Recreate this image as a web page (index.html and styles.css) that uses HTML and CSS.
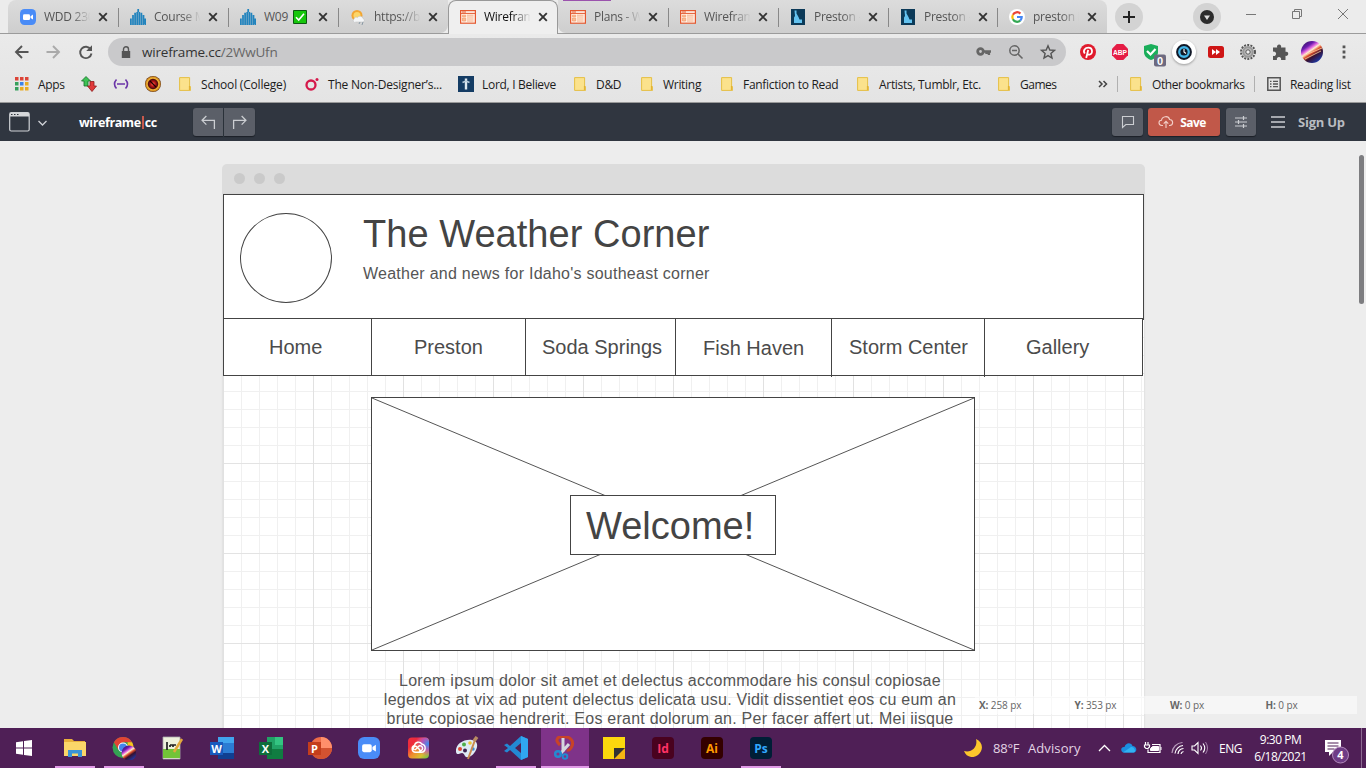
FILE: index.html
```html
<!DOCTYPE html>
<html lang="en">
<head>
<meta charset="utf-8">
<title>Wireframe.cc</title>
<link rel="stylesheet" href="styles.css">
</head>
<body>
<svg class="defs" width="0" height="0">
  <defs>
    <linearGradient id="rainbow" x1="0" y1="0" x2="1" y2="1"><stop offset="0" stop-color="#f0303c"/><stop offset=".25" stop-color="#ee2a3c"/><stop offset=".5" stop-color="#f08a2c"/><stop offset=".75" stop-color="#d8c030"/><stop offset="1" stop-color="#5cc04a"/></linearGradient>
    <radialGradient id="violet" cx=".95" cy=".3" r=".6"><stop offset="0" stop-color="#3a8ef0"/><stop offset=".5" stop-color="#b04ad0" stop-opacity=".8"/><stop offset="1" stop-color="#e436b8" stop-opacity="0"/></radialGradient>
    <linearGradient id="streak" x1="0" y1="0" x2=".7" y2="1"><stop offset="0" stop-color="#1b1140"/><stop offset=".3" stop-color="#6c1bb0"/><stop offset=".42" stop-color="#e66be0"/><stop offset=".5" stop-color="#fff0d0"/><stop offset=".6" stop-color="#e0512c"/><stop offset=".72" stop-color="#371030"/><stop offset="1" stop-color="#1d3aa8"/></linearGradient>
    <radialGradient id="ball"><stop offset="0" stop-color="#ff7a5a"/><stop offset=".3" stop-color="#c01818"/><stop offset=".58" stop-color="#500c0c"/><stop offset=".72" stop-color="#f4b838"/><stop offset=".88" stop-color="#d08a20"/><stop offset="1" stop-color="#5a2a08"/></radialGradient>
  </defs>
  <symbol id="close" viewBox="0 0 10 10"><path d="M1.2 1.2l7.6 7.6M8.8 1.2L1.2 8.8" stroke="currentColor" stroke-width="1.9"/></symbol>
  <symbol id="zoomapp" viewBox="0 0 16 16"><rect width="16" height="16" rx="4.5" fill="#4a8cf7"/><rect x="3" y="5.2" width="7" height="5.8" rx="1.3" fill="#fff"/><path d="M10.5 7.3L13 5.6v5L10.5 9z" fill="#fff"/></symbol>
  <symbol id="canvas" viewBox="0 0 16 16"><path d="M.9 16V9.5M3 16V6M5.1 16V3.8M7.2 16V3M8.2 3V0M9.3 16V3M11.400 16V3.8M13.5 16V6M15.3 16V9.5" stroke="#2183bd" stroke-width="1.75"/></symbol>
  <symbol id="wire" viewBox="0 0 16 14"><rect x=".6" y=".6" width="14.8" height="12.6" fill="#fff3ea" stroke="#e4582f" stroke-width="1.2"/><path d="M1 3.4h14" stroke="#e4582f"/><path d="M3 1v2M5 1v2" stroke="#e4582f"/><path d="M2.5 5.2h3.2v1.5H2.5zM2.5 8h3.2v3H2.5zM7 5.2h6.5M7 7h6.5M7 9h6.5M7 11h6.5" fill="#f9bd96" stroke="#f4a071" stroke-width=".8"/></symbol>
  <symbol id="idaho" viewBox="0 0 14 16"><path d="M0 0h14v16H0z" fill="#0c3a58"/><path d="M3.500 1.500h2v3L7.500 8l1 2.500H11V14H3V8.500L4 7z" fill="#63c2ef"/></symbol>
  <symbol id="folder" viewBox="0 0 12 14"><path d="M.6.6h10v9h1v3.800h-11z" fill="#fbe28c" stroke="#e5bf45"/><path d="M10.4 9v4" stroke="#e0ae2d" fill="none"/></symbol>
</svg>

<header class="chrome">
  <div class="tabstrip">
    <div class="tab first"><svg class="fav"><use href="#zoomapp"/></svg><span class="ttl">WDD 230</span><svg class="x"><use href="#close"/></svg></div>
    <div class="tab"><svg class="fav"><use href="#canvas"/></svg><span class="ttl">Course M</span><svg class="x"><use href="#close"/></svg></div>
    <div class="tab"><svg class="fav"><use href="#canvas"/></svg><span class="ttl solid">W09 <svg class="check" viewBox="0 0 14 14"><path d="M.5.5h13v13H.5z" fill="#16c60c" stroke="#0b5a10"/><path d="M3 7.3l2.700 2.800L11 3.800" stroke="#fff" stroke-width="1.6" fill="none"/></svg></span><svg class="x"><use href="#close"/></svg></div>
    <div class="tab nosep"><svg class="fav" viewBox="0 0 16 16"><circle cx="7" cy="6.500" r="5.500" fill="#f2a633"/><circle cx="7" cy="6.500" r="3.500" fill="#fcd669"/><path d="M4 10a2.200 2.200 0 0 1 3.500-1.400A3 3 0 0 1 13 9.500a1.800 1.800 0 0 1 0 3.500H6a1.800 1.800 0 0 1-2-3z" fill="#f4f6f8" stroke="#bbb" stroke-width=".5"/><path d="M10 13l-1 2M13 13l-1 3" stroke="#8a9aa5"/></svg><span class="ttl">https://b</span><svg class="x"><use href="#close"/></svg></div>
    <div class="tab active"><svg class="fav wf"><use href="#wire"/></svg><span class="ttl">Wirefram</span><svg class="x"><use href="#close"/></svg></div>
    <div class="tab lit"><svg class="fav wf"><use href="#wire"/></svg><span class="ttl">Plans - W</span><svg class="x"><use href="#close"/></svg></div>
    <div class="tab"><svg class="fav wf"><use href="#wire"/></svg><span class="ttl">Wirefram</span><svg class="x"><use href="#close"/></svg></div>
    <div class="tab"><svg class="fav"><use href="#idaho"/></svg><span class="ttl">Preston -</span><svg class="x"><use href="#close"/></svg></div>
    <div class="tab penult"><svg class="fav"><use href="#idaho"/></svg><span class="ttl">Preston -</span><svg class="x"><use href="#close"/></svg></div>
    <div class="tab last nosep"><svg class="fav" viewBox="0 0 16 16"><circle cx="8" cy="8" r="8" fill="#fff"/><g fill="none" stroke-width="2.2"><path d="M11.400 4.600A4.700 4.700 0 0 0 3.900 5.800" stroke="#ea4335"/><path d="M3.900 5.800a4.700 4.700 0 0 0 0 4.400" stroke="#fbbc05"/><path d="M3.900 10.200a4.700 4.700 0 0 0 7.300 1.400" stroke="#34a853"/><path d="M11.200 11.600A4.700 4.700 0 0 0 12.700 8H8" stroke="#4285f4"/></g></svg><span class="ttl">preston i</span><svg class="x"><use href="#close"/></svg></div>
    <div class="round plus"><svg viewBox="0 0 14 14" width="14" height="14"><path d="M7 1v12M1 7h12" stroke="#222" stroke-width="2"/></svg></div>
    <div class="round search"><svg viewBox="0 0 14 14" width="14" height="14"><circle cx="7" cy="7" r="7" fill="#2b2b2b"/><path d="M4 5.500h6L7 10z" fill="#ddd"/></svg></div>
    <svg class="winctl" viewBox="0 0 104 12"><path d="M0 6.500h10M46.500 3.500h7v7h-7zM48.500 3.500v-2h7v7h-2M92 1l10 10M102 1L92 11" fill="none" stroke="#777"/></svg>
  </div>

  <div class="toolbar">
    <svg class="nav" viewBox="0 0 80 16"><g fill="none" stroke-width="1.900"><path d="M14.500 8H2M8 2L2 8l6 6" stroke="#555"/><path d="M32.500 8H45M39 2l6 6-6 6" stroke="#aaa"/><path d="M76.700 5.300A5.700 5.700 0 1 0 77.500 9.500" stroke="#555"/></g><path d="M78 1.200V7h-5.800z" fill="#555"/></svg>
    <div class="omnibox">
      <svg class="lock" viewBox="0 0 10 13"><path d="M.8 5h8.400v7H.8z" fill="#555"/><path d="M2.500 5V3.300a2.500 2.500 0 0 1 5 0V5" stroke="#555" stroke-width="1.400" fill="none"/></svg>
      <span class="url">wireframe.cc<i>/2WwUfn</i></span>
      <svg class="omni" viewBox="0 0 80 16"><circle cx="4.500" cy="7.500" r="2.800" fill="none" stroke="#666" stroke-width="2.800"/><path d="M8 7.500h7M12.900 7.500v3.500M10.500 8v2" stroke="#666" stroke-width="2.400"/><circle cx="38.500" cy="6.500" r="4.700" fill="none" stroke="#666" stroke-width="1.500"/><path d="M36 6.500h5M42 10l4.500 4.500" stroke="#666" stroke-width="1.600"/><path d="M72 1.800l1.800 4.200 4.700.4-3.600 3.100 1.100 4.500-4-2.400-4 2.400 1.100-4.500-3.600-3.100 4.700-.4z" fill="none" stroke="#555" stroke-width="1.400"/></svg>
    </div>
    <div class="exts">
      <svg viewBox="0 0 32 32"><circle cx="16" cy="16" r="8" fill="#e01b2d"/><path d="M14.200 22l2-8M12.800 17.500c-2.200-3 .3-5.900 3.600-5.900 4.800 0 4.500 7 1 7-1 0-1.800-.5-2-1.200" fill="none" stroke="#fff" stroke-width="1.800"/></svg>
      <svg viewBox="0 0 32 32"><path d="M12.700 8h6.600l4.700 4.700v6.600L19.300 24h-6.600L8 19.300v-6.600z" fill="#e51c45"/><text x="16" y="19" class="abp" text-anchor="middle" textLength="14" lengthAdjust="spacingAndGlyphs">ABP</text></svg>
      <svg viewBox="0 0 32 32"><path d="M15 8l7 2v6c0 4-3 6.500-7 8-4-1.500-7-4-7-8v-6z" fill="#1aae5a"/><path d="M11 15l3.500 3.500 5-5.500" stroke="#fff" stroke-width="2.200" fill="none"/><rect x="18" y="18.500" width="12" height="12" rx="2" fill="#6d6a80"/><text x="24" y="28.500" class="badge" text-anchor="middle">0</text></svg>
      <svg viewBox="0 0 32 32"><circle class="halo" cx="16" cy="16" r="12" fill="#fff"/><circle cx="16" cy="16" r="6.900" fill="#43b5e8" stroke="#111827" stroke-width="2"/><circle cx="16" cy="16" r="3.600" fill="#111827"/><path d="M16 13v3l2 1.500" stroke="#fff" stroke-width="1.100" fill="none"/></svg>
      <svg viewBox="0 0 32 32"><rect x="8" y="10" width="16" height="12" rx="2.500" fill="#cf1616"/><path d="M12 13l4 3-4 3zM16 13l4 3-4 3z" fill="#fff"/></svg>
      <svg viewBox="0 0 32 32"><circle cx="16" cy="16" r="7" fill="none" stroke="#555" stroke-width="2" stroke-dasharray="2 1.200"/><circle cx="16" cy="16" r="4.800" fill="#bbb" stroke="#999" stroke-width="2.200"/><circle cx="16" cy="16" r="2.200" fill="#eee" stroke="#555"/></svg>
      <svg viewBox="0 0 32 32"><path d="M9 11.500h4.200a2.100 2.100 0 1 1 3.800 0H21.500v4.300a2.100 2.100 0 1 1 0 4V24H17a2.200 2.200 0 1 0-4 0H9v-4.200a2.200 2.200 0 1 0 0-4z" fill="#555"/></svg>
      <svg viewBox="0 0 32 32"><circle cx="16" cy="16" r="11" fill="url(#streak)"/><path d="M7 20L26 12M9 23l16-8" stroke="#ffcf9f" stroke-width=".8"/></svg>
      <svg viewBox="0 0 32 32"><path d="M14.600 9.500h2.800v2.800h-2.800zM14.600 14.600h2.800v2.800h-2.800zM14.600 19.700h2.800v2.800h-2.800z" fill="#555"/></svg>
    </div>
  </div>

  <nav class="bookmarks">
    <div class="bm apps"><svg viewBox="0 0 14 14"><path d="M0 0h3.500v3.500H0zM5 0h3.500v3.500H5zM10 0h3.500v3.500H10z" fill="#dc4437"/><path d="M0 5h3.500v3.500H0z" fill="#37a05c"/><path d="M5 5h3.500v3.500H5z" fill="#3b83ea"/><path d="M10 5h3.500v3.500H10zM5 10h3.500v3.500H5zM10 10h3.500v3.500H10z" fill="#e9ac23"/><path d="M0 10h3.500v3.500H0z" fill="#37a05c"/></svg><span>Apps</span></div>
    <div class="bm ico"><svg viewBox="0 0 16 16"><path d="M5 .5L9.500 5H7v5H3V5H.5z" fill="#3ec255" stroke="#16702a" stroke-width=".8"/><path d="M9 5.500h4v4.500h2.500L11 15.500 6.500 10H9z" fill="#e03a3a" stroke="#8d1c1c" stroke-width=".8"/></svg></div>
    <div class="bm ico"><svg viewBox="0 0 16 16"><path d="M3.500 3.500Q-.5 8 3.500 12.500M12.500 3.500Q16.500 8 12.500 12.500M4 8h8" fill="none" stroke="#6b35a8" stroke-width="1.600"/></svg></div>
    <div class="bm ball"><svg viewBox="0 0 16 16"><circle cx="8" cy="8" r="8" fill="url(#ball)"/><path d="M5 5l6 6" stroke="#200" stroke-width="1.200"/></svg></div>
    <div class="bm fo school"><svg><use href="#folder"/></svg><span>School (College)</span></div>
    <div class="bm nond"><svg viewBox="0 0 14 14"><circle cx="6" cy="8" r="4.500" fill="none" stroke="#d5184a" stroke-width="2.300"/><circle cx="12" cy="2.500" r="1.500" fill="#d5184a"/></svg><span>The Non-Designer’s...</span></div>
    <div class="bm lord"><svg viewBox="0 0 16 16"><path d="M0 0h16v16H0z" fill="#143c64"/><path d="M8 2.500v11" stroke="#dce8f0" stroke-width="2.400"/><path d="M4.500 6.500L8 5l3.500 1.500" fill="none" stroke="#b9cddc" stroke-width="1.600"/></svg><span>Lord, I Believe</span></div>
    <div class="bm fo dnd"><svg><use href="#folder"/></svg><span>D&amp;D</span></div>
    <div class="bm fo writing"><svg><use href="#folder"/></svg><span>Writing</span></div>
    <div class="bm fo fan"><svg><use href="#folder"/></svg><span>Fanfiction to Read</span></div>
    <div class="bm fo artists"><svg><use href="#folder"/></svg><span>Artists, Tumblr, Etc.</span></div>
    <div class="bm fo games"><svg><use href="#folder"/></svg><span>Games</span></div>
    <div class="bm more"><svg viewBox="0 0 10 8"><path d="M1 1l3 3-3 3M5.500 1l3 3-3 3" stroke="#444" stroke-width="1.500" fill="none"/></svg></div>
    <div class="bm fo other"><svg><use href="#folder"/></svg><span>Other bookmarks</span></div>
    <div class="bm reading"><svg viewBox="0 0 14 14"><path d="M.8.8h12.400v12.400H.8z" fill="none" stroke="#555" stroke-width="1.500"/><path d="M3 4.300h1.500M6 4.300h5M3 7h1.500M6 7h5M3 9.700h1.500M6 9.700h5" stroke="#555" stroke-width="1.300"/></svg><span>Reading list</span></div>
  </nav>
</header>

<div class="appbar">
  <svg class="window" viewBox="0 0 38 20"><rect x=".7" y=".7" width="19.500" height="18.300" rx="1.500" fill="none" stroke="#cfd2d6" stroke-width="1.200"/><path d="M1 1h19v3.500H1z" fill="#d5d7da"/><path d="M2 2.500h1.500M5 2.500h1.500M8 2.500h1.500" stroke="#30363f"/><path d="M29.500 9l4 4 4-4" fill="none" stroke="#cfd2d6" stroke-width="1.300"/></svg>
  <div class="brand">wireframe<b></b>cc</div>
  <div class="btn undo"><svg viewBox="0 0 14 14"><path d="M5 1L1 5l4 4M1 5h11.500v8" fill="none" stroke="#ccced2" stroke-width="1.200"/></svg></div>
  <div class="btn redo"><svg viewBox="0 0 14 14"><path d="M9 1l4 4-4 4M13 5H1.500v8" fill="none" stroke="#ccced2" stroke-width="1.200"/></svg></div>
  <div class="btn comment"><svg viewBox="0 0 14 14"><path d="M1.500 1.500h11v8H4.800L1.500 12.500z" fill="none" stroke="#ccced2" stroke-width="1.100"/></svg></div>
  <div class="btn save"><svg viewBox="0 0 16 14"><path d="M5 10.500H3.800C0 10.200.200 5.500 3.500 5.300 4 1 10.500.300 11.600 4.500c4 .2 4 5.700.2 6H11M8 13V6.500M5.700 8.700L8 6.300l2.300 2.400" fill="none" stroke="#f3cfc8" stroke-width="1.100"/></svg><span>Save</span></div>
  <div class="btn sliders"><svg viewBox="0 0 14 14"><path d="M1 3h12M1 7h12M1 11h12M9.500 1v4M4.500 5v4M9.500 9v4" stroke="#ccced2" stroke-width="1.200"/></svg></div>
  <svg class="burger" viewBox="0 0 14 12"><path d="M0 1h14M0 6h14M0 11h14" stroke="#ccced2" stroke-width="1.300"/></svg>
  <span class="signup">Sign Up</span>
</div>

<main class="stage">
  <div class="frame">
    <div class="framebar"><i></i><i></i><i></i></div>
    <div class="page">
      <div class="head">
        <div class="logo"></div>
        <div class="titles"><h1>The Weather Corner</h1><p>Weather and news for Idaho's southeast corner</p></div>
      </div>
      <div class="menu">
        <div class="home">Home</div><div class="preston">Preston</div><div class="soda">Soda Springs</div><div class="fish">Fish Haven</div><div class="storm">Storm Center</div><div class="gallery">Gallery</div>
      </div>
      <div class="hero">
        <svg viewBox="0 0 602 252"><path d="M0 0L602 252M602 0L0 252" stroke="#555" stroke-width="1"/></svg>
        <div class="welcome">Welcome!</div>
      </div>
      <p class="lorem">Lorem ipsum dolor sit amet et delectus accommodare his consul copiosae<br>legendos at vix ad putent delectus delicata usu. Vidit dissentiet eos cu eum an<br>brute copiosae hendrerit. Eos erant dolorum an. Per facer affert ut. Mei iisque</p>
    </div>
  </div>
  <div class="coords"><span><b>X:</b> 258 px</span><span><b>Y:</b> 353 px</span><span><b>W:</b> 0 px</span><span><b>H:</b> 0 px</span></div>
  <div class="scroll"></div>
</main>

<footer class="taskbar">
  <div class="app start"><svg viewBox="0 0 24 24"><path d="M4 6.300l7-1v6.200H4zM12 5.100l8-1.100v7.500h-8zM4 12.500h7v6.200l-7-1zM12 12.500h8V20l-8-1.100z" fill="#fff"/></svg></div>
  <div class="app on"><svg viewBox="0 0 24 24"><path d="M1 3h8l2 2h11v15H1z" fill="#e9b13b"/><path d="M1 6h22v14H1z" fill="#fbd669"/><path d="M5 21v-7h14v7h-4v-3.500h-6V21z" fill="#3b94d6"/></svg></div>
  <div class="app on"><svg viewBox="0 0 24 24"><circle cx="11" cy="11.500" r="10.500" fill="#34a353"/><path d="M1.900 6.300a10.500 10.500 0 0 1 18.200 0H11l-4.500 7.800z" fill="#e14434"/><path d="M20.100 6.300A10.500 10.500 0 0 1 11 22l4.600-8V6.300z" fill="#fbc31c"/><circle cx="11" cy="11.500" r="5" fill="#fff"/><circle cx="11" cy="11.500" r="4" fill="#4485ec"/><circle cx="17" cy="17" r="7.500" fill="url(#streak)"/></svg></div>
  <div class="app"><svg viewBox="0 0 24 24"><path d="M2 1h17v22H2z" fill="#eef2dc" stroke="#aaa" stroke-width=".8"/><path d="M2 13h17v9H2z" fill="#72c437"/><path d="M6 6v8M9 9v2M12 9v2M9 9h6" stroke="#222" stroke-width="1.700"/><path d="M21 3l-8 13" stroke="#e2a93c" stroke-width="2.500"/></svg></div>
  <div class="app"><svg viewBox="0 0 24 24"><path d="M8 1h16v22H8z" fill="#2b7cd3"/><path d="M8 1h16v6H8z" fill="#41a5ee"/><path d="M8 17h16v6H8z" fill="#103f91"/><path d="M0 6h13v13H0z" fill="#185abd"/><text x="6.500" y="16.500" class="office" text-anchor="middle">W</text></svg></div>
  <div class="app"><svg viewBox="0 0 24 24"><path d="M8 1h16v22H8z" fill="#21a366"/><path d="M16 1h8v8h-8z" fill="#33c481"/><path d="M8 13h16v10H8z" fill="#107c41"/><path d="M0 6h13v13H0z" fill="#0e6e3b"/><text x="6.500" y="16.500" class="office" text-anchor="middle">X</text></svg></div>
  <div class="app"><svg viewBox="0 0 24 24"><circle cx="13" cy="12" r="11" fill="#ed6c47"/><path d="M13 1a11 11 0 0 1 11 11H13z" fill="#ff8f6b"/><path d="M2 12h22a11 11 0 0 1-22 0z" fill="#d35230"/><path d="M0 6h13v13H0z" fill="#c43e1c"/><text x="6.500" y="16.500" class="office" text-anchor="middle">P</text></svg></div>
  <div class="app"><svg><use href="#zoomapp" x="1" y="1" width="22" height="22"/></svg></div>
  <div class="app"><svg viewBox="0 0 24 24"><rect x="2" y="1.500" width="21" height="21" rx="4" fill="url(#rainbow)"/><rect x="2" y="1.500" width="21" height="21" rx="4" fill="url(#violet)"/><g fill="none" stroke="#fff" stroke-width="1.400"><path d="M13 14.500a2.500 2.500 0 1 0 0-4.500l-4 4M8.500 9.500a4 4 0 0 1 7.300-1.500 4.200 4.200 0 0 1-.5 8.300H9.500a3.500 3.500 0 0 1-1-6.800zM8.500 14a2 2 0 1 1 2.500-3l3 3"/></g></svg></div>
  <div class="app"><svg viewBox="0 0 24 24"><path d="M1 16C0 8 9 3 17 4c6 1 6 6 4 10s-5 7-8 7c-4 1-3-4-6-4-2 0-5 3-6-1z" fill="#dfebf4"/><circle cx="5" cy="13" r="2" fill="#e04b35"/><circle cx="9" cy="8.500" r="2" fill="#4fae4a"/><circle cx="15" cy="7" r="1.800" fill="#edc334"/><circle cx="10" cy="14.500" r="2" fill="#3b2451"/><circle cx="18" cy="13" r="1.700" fill="#3f8fd8"/><path d="M20 4l-7 19" stroke="#c98a4f" stroke-width="2"/><path d="M19 5l3-4" stroke="#b98a62" stroke-width="3.500"/></svg></div>
  <div class="app on"><svg viewBox="0 0 24 24"><path d="M17 0l7 3v18l-7 3-11-10-3 2.500L0 15l4-3-4-3 3-1.500L6 10zM17 7l-6 5 6 5z" fill="#2389d4" fill-rule="evenodd"/><path d="M17 0l7 3v18l-7 3z" fill="#30a6f0"/></svg></div>
  <div class="app on current"><svg viewBox="0 0 24 24"><path d="M7 9C1 4 5 0 10 1c8-1 12 5 8 11q-2 3-4 2" fill="none" stroke="#c84327" stroke-width="3"/><path d="M10 2v14M16 8l-8 9" stroke="#d4d8df" stroke-width="3"/><circle cx="5" cy="18" r="2.800" fill="none" stroke="#238ad1" stroke-width="2.500"/><circle cx="12" cy="20.500" r="2.300" fill="none" stroke="#238ad1" stroke-width="2"/></svg></div>
  <div class="app"><svg viewBox="0 0 24 24"><path d="M1 1h22v11L12 23H1z" fill="#fcd80d"/><path d="M12 12h11v11H12z" fill="#f5b612"/><path d="M12 12h11L12 23z" fill="#333"/></svg></div>
  <div class="app"><svg viewBox="0 0 24 24"><rect x="1" y="1" width="22" height="22" rx="4" fill="#49021f"/><text x="12" y="16.500" class="adobe id" text-anchor="middle">Id</text></svg></div>
  <div class="app"><svg viewBox="0 0 24 24"><rect x="1" y="1" width="22" height="22" rx="4" fill="#330000"/><text x="12" y="16.500" class="adobe ai" text-anchor="middle">Ai</text></svg></div>
  <div class="app on"><svg viewBox="0 0 24 24"><rect x="1" y="1" width="22" height="22" rx="4" fill="#001e36"/><text x="12" y="16.500" class="adobe ps" text-anchor="middle">Ps</text></svg></div>
  <div class="tray">
    <svg class="moon" viewBox="0 0 18 18"><path d="M12 0c7 3 8 11 2 16C9 20 2 18 0 12c8 2 14-4 12-12z" fill="#fdc62c"/></svg>
    <span class="temp">88°F</span><span class="adv">Advisory</span>
    <svg class="sys" viewBox="0 0 112 20"><path d="M1 13l5.500-5.500L12 13" fill="none" stroke="#fff" stroke-width="1.300"/><path d="M26 14.500c-4-.500-3.500-6 .5-5.500 1.500-5 7-4.500 8-1 4.500 0 5 6 1.500 6.500z" fill="#1b8ee0"/><path d="M25 14.500L33 9c3-1 6 5 2.500 5.500z" fill="#31b2f3"/><path d="M54 6.500h8v8H50v-3M50 4v3M47.500 4v3M46.500 7h5v2l-1.500 1.500h-2L46.500 9z" fill="none" stroke="#fff" stroke-width="1.200"/><path d="M54.500 8.500h6v4h-8v-2zM63 9v3" fill="#fff" stroke="#fff"/><g fill="none"><path d="M74 15A11 11 0 0 1 84.500 4.500" stroke="#b79cbb" stroke-width="1.200"/><path d="M77 15.500a9 9 0 0 1 8-8M80 16a6 6 0 0 1 5.500-5.500M83 16a3 3 0 0 1 2.500-2.500" stroke="#fff" stroke-width="1.200"/><path d="M94 8h2.500L100 4.500v11L96.500 12H94zM102.500 7.500q2 2.500 0 5M105 5.500q3.500 4.500 0 9" stroke="#fff" stroke-width="1.100"/><path d="M107.500 4q4 6 0 12" stroke="#a582aa"/></g></svg>
    <span class="lang">ENG</span>
    <div class="clock"><span>9:30 PM</span><span>6/18/2021</span></div>
    <svg class="note" viewBox="0 0 28 28"><path d="M3 4h16v12H11l-4 4v-4H3z" fill="#fff"/><path d="M5.500 7h11M5.500 10h11M5.500 13h7" stroke="#4f1f56"/><circle cx="18.500" cy="19" r="8" fill="#6f3d86" stroke="#b28abb"/><text x="18.500" y="23" class="cnt" text-anchor="middle">4</text></svg>
    <i class="peek"></i>
  </div>
</footer>
</body>
</html>
```
FILE: styles.css
```css
* { box-sizing: border-box; }
body { margin: 0; width: 1366px; height: 768px; overflow: hidden; background: #ededed; font-family: "Open Sans", "Noto Sans", sans-serif; }
svg { display: block; flex: none; }
.defs { position: absolute; }

.chrome { height: 103px; border-bottom: 1px solid #999; background: linear-gradient(#ededed, #e4e4e4); }
.tabstrip { display: flex; height: 34px; padding-left: 8px; border-bottom: 1px solid #9b9b9b; background: #ececec; }
.tab { display: flex; align-items: center; position: relative; width: 110px; height: 33px; padding-left: 12px; background: linear-gradient(#dcdcdc, #cecece); color: #555; font-size: 12px; }
.tab::after { content: ""; position: absolute; right: -1px; top: 8px; width: 1px; height: 19px; background: #888; z-index: 1; }
.tab.nosep::after, .tab.active::after { display: none; }
.tab.first { border-radius: 8px 0 0 0; }
.tab.nosep { border-radius: 0 0 8px 0; }
.tab.penult { width: 109px; }
.tab.last { width: 110px; border-radius: 0 8px 0 0; }
.tab.lit { border-radius: 0 0 0 8px; }
.tab.lit::before { content: ""; position: absolute; left: 5px; top: 0; width: 48px; height: 1px; background: #9b53ad; }
.tab.active { height: 34px; padding: 0 0 2px 11px; background: #efefef; color: #111; border: 1px solid #999; border-bottom: 0; border-radius: 8px 8px 0 0; }
.fav { width: 16px; height: 16px; }
.fav.wf { height: 14px; }
.ttl { width: 47px; margin-left: 8px; overflow: hidden; white-space: nowrap; letter-spacing: -.25px; -webkit-mask-image: linear-gradient(90deg, #000 60%, transparent 99%); }
.ttl.solid { display: flex; align-items: center; gap: 5px; -webkit-mask-image: none; }
.check { width: 14px; height: 14px; }
.x { width: 10px; height: 10px; margin-left: 7px; color: #333; }
.round { display: flex; align-items: center; justify-content: center; width: 28px; height: 28px; border-radius: 50%; background: #d3d3d3; }
.plus { margin: 3px 0 0 8px; }
.search { margin: 3px 0 0 50px; }
.winctl { width: 104px; height: 12px; margin: 8px 0 0 25px; }

.toolbar { display: flex; align-items: center; height: 36px; }
.nav { width: 80px; height: 16px; margin-left: 14px; }
.omnibox { display: flex; align-items: center; width: 958px; height: 28px; margin-left: 14px; padding-left: 13px; border-radius: 14px; background: #c9c9cb; }
.lock { width: 10px; height: 13px; }
.url { margin-left: 11px; font-size: 13.500px; letter-spacing: -.2px; color: #333; }
.url i { font-style: normal; color: #666; }
.omni { width: 80px; height: 16px; margin: 0 10px 0 auto; }
.exts { display: flex; margin-left: 6px; }
.exts svg { width: 32px; height: 32px; }
.abp { font: bold 8px "Liberation Sans", sans-serif; fill: #fff; }
.badge { font: bold 11px "Liberation Sans", sans-serif; fill: #fff; }
.halo { filter: drop-shadow(0 1px 1px #999); }

.bookmarks { display: flex; height: 32px; margin-top: -2px; padding-left: 15px; font-size: 12px; color: #1c1c1c; letter-spacing: -.3px; }
.bm { display: flex; align-items: center; height: 32px; white-space: nowrap; }
.bm svg { width: 16px; height: 16px; }
.bm.fo svg { width: 12px; height: 14px; }
.bm.fo span { margin-left: 10px; }
.bm.apps { width: 66px; }
.bm.apps svg, .bm.nond svg, .bm.reading svg { width: 14px; height: 14px; }
.bm.apps span { margin-left: 9px; }
.bm.nond span { margin-left: 9px; letter-spacing: -.2px; }
.bm.lord span { margin-left: 8px; }
.bm.ico { width: 32px; }
.bm.ball { width: 34px; }
.bm.school { width: 126px; letter-spacing: -.2px; }
.bm.nond { width: 153px; }
.bm.lord { width: 116px; }
.bm.dnd { width: 67px; }
.bm.writing { width: 80px; }
.bm.fan { width: 136px; }
.bm.artists { width: 141px; }
.bm.games { width: 100px; letter-spacing: -.5px; }
.bm.more { width: 32px; }
.bm.more svg { width: 10px; height: 8px; }
.bm.other { width: 137px; letter-spacing: -.4px; }
.bm.reading span { margin-left: 9px; }
.bm.other::before, .bm.reading::before { content: ""; width: 1px; height: 16px; margin: 0 12px 0 -13px; background: #b0b0b0; }

.appbar { display: flex; align-items: center; height: 38px; padding-left: 9px; background: #303640; }
.window { width: 38px; height: 20px; }
.brand { display: flex; align-items: center; width: 78px; margin-left: 32px; color: #fff; font-size: 12.500px; font-weight: 700; letter-spacing: -.4px; }
.brand b { width: 2px; height: 13px; flex: none; margin: 0 1px; background: #c7594c; }
.btn { display: flex; align-items: center; justify-content: center; width: 30px; height: 28px; background: #5b5f68; border-radius: 3px; box-shadow: 0 1px 1px #1c2027; }
.btn svg { width: 14px; height: 14px; }
.undo { margin-left: 36px; border-radius: 3px 0 0 3px; }
.undo svg, .redo svg { width: 15px; height: 15px; }
.redo { width: 31px; margin-left: 1px; border-radius: 0 3px 3px 0; }
.comment { width: 31px; margin-left: 857px; }
.save { width: 72px; margin-left: 5px; padding-right: 4px; gap: 6px; background: #c15849; color: #fff; font-size: 12px; font-weight: 700; letter-spacing: -.6px; }
.save svg { width: 16px; }
.sliders { margin-left: 6px; }
.burger { width: 14px; height: 12px; margin-left: 15px; }
.signup { margin-left: 13px; color: #b9bcc0; font-size: 13px; font-weight: 700; letter-spacing: -.25px; white-space: nowrap; }

.stage { position: relative; height: 587px; padding: 23px 0 0 222px; overflow: hidden; background: #ededed; }
.frame { width: 923px; font-family: "Liberation Sans", Arial, sans-serif; color: #444; }
.framebar { display: flex; align-items: center; gap: 9px; height: 30px; padding: 0 0 1px 12px; border-radius: 5px 5px 0 0; background: #dcdcdc; }
.framebar i { width: 11px; height: 11px; border-radius: 50%; background: #cacaca; }
.page { width: 921px; height: 640px; margin-left: 1px; box-shadow: 0 0 2px #ccc; background-color: #fff;
  background-image: linear-gradient(90deg, #e1e1e1 1px, transparent 1px), linear-gradient(#e3e3e3 1px, transparent 1px), linear-gradient(90deg, #f0f0f0 1px, transparent 1px), linear-gradient(#f0f0f0 1px, transparent 1px);
  background-size: 90px 90px, 90px 90px, 18px 18px, 18px 18px; background-position: 0 -1px; }
.head { display: flex; width: 921px; height: 126px; border: 1px solid #444; background: #fff; }
.logo { width: 92px; height: 90px; margin: 18px 0 0 16px; border: 1px solid #444; border-radius: 50%; }
.titles { margin-left: 31px; }
h1 { margin: 17px 0 0; font-size: 38px; line-height: 44px; font-weight: 400; letter-spacing: .04px; }
.titles p { margin: 8px 0 0; font-size: 16px; line-height: 19px; letter-spacing: .25px; color: #555; }
.menu { display: flex; position: relative; width: 920px; height: 58px; margin-top: -2px; border: 1px solid #444; border-right: 0; background: #fff; font-size: 20px; line-height: 56px; color: #4b4b4b; }
.menu div { height: 56px; border-right: 1px solid #444; white-space: nowrap; }
.home { width: 148px; padding-left: 45px; }
.preston { width: 154px; padding-left: 42px; }
.soda { width: 150px; padding-left: 16px; }
.menu .fish { width: 156px; height: 58px; padding-left: 27px; line-height: 58px; }
.menu .storm { width: 153px; height: 58px; padding-left: 17px; }
.gallery { width: 158px; padding-left: 41px; }
.hero { display: grid; place-items: center; width: 604px; height: 254px; margin: 21px 0 0 148px; border: 1px solid #444; background: #fff; }
.hero svg { grid-area: 1 / 1; width: 602px; height: 252px; }
.welcome { grid-area: 1 / 1; z-index: 1; width: 206px; height: 60px; margin-top: 1px; padding-left: 15px; border: 1px solid #444; background: #fff; font-size: 38px; line-height: 60px; }
.lorem { width: 604px; margin: 20px 0 0 145px; font-size: 16px; line-height: 19px; letter-spacing: .245px; text-align: center; white-space: nowrap; color: #555; }
.coords { position: absolute; left: 975px; top: 555px; display: flex; width: 382px; height: 18px; padding-left: 4px; background: rgba(255,255,255,.5); color: #666; font-size: 10px; line-height: 18px; letter-spacing: -.1px; }
.coords span { flex: none; width: 95.500px; }
.scroll { position: absolute; left: 1359px; top: 14px; width: 5px; height: 149px; border-radius: 3px; background: #7d7d80; }

.taskbar { display: flex; height: 40px; background: #4f1f56; }
.app { display: flex; align-items: center; justify-content: center; width: 49px; height: 40px; }
.app svg { width: 24px; height: 24px; }
.start { width: 50px; padding-right: 2px; }
.app.on { background: linear-gradient(#e09ae6, #e09ae6) center bottom / 40px 2px no-repeat; }
.app.current { background: linear-gradient(#e09ae6, #e09ae6) center bottom / 48px 2px no-repeat, linear-gradient(#7f3389, #7f3389) center / 48px 40px no-repeat; }
.office { font: bold 11px "Open Sans", sans-serif; fill: #fff; }
.adobe { font: bold 12px "Open Sans", sans-serif; }
.id { fill: #ff3366; }
.ai { fill: #ff9a00; }
.ps { fill: #31a8ff; }
.tray { display: flex; align-items: center; margin-left: 179px; color: #fff; font-size: 12px; white-space: nowrap; }
.moon { width: 18px; height: 18px; }
.temp { width: 35px; margin-left: 11px; color: #e3d5e5; font-size: 13px; letter-spacing: -.2px; }
.adv { width: 53px; color: #e3d5e5; font-size: 13px; letter-spacing: .1px; }
.sys { width: 112px; height: 20px; margin-left: 17px; }
.lang { width: 25px; margin-left: 9px; letter-spacing: -.5px; }
.clock { display: flex; flex-direction: column; align-items: center; width: 56px; margin-left: 8px; padding-left: 1px; line-height: 17px; letter-spacing: -.5px; }
.note { width: 28px; height: 28px; margin: 4px 0 0 14px; }
.cnt { font: bold 11px "Open Sans", sans-serif; fill: #fff; }
.peek { width: 1px; height: 40px; margin-left: 11px; background: #8b6a90; }
```
